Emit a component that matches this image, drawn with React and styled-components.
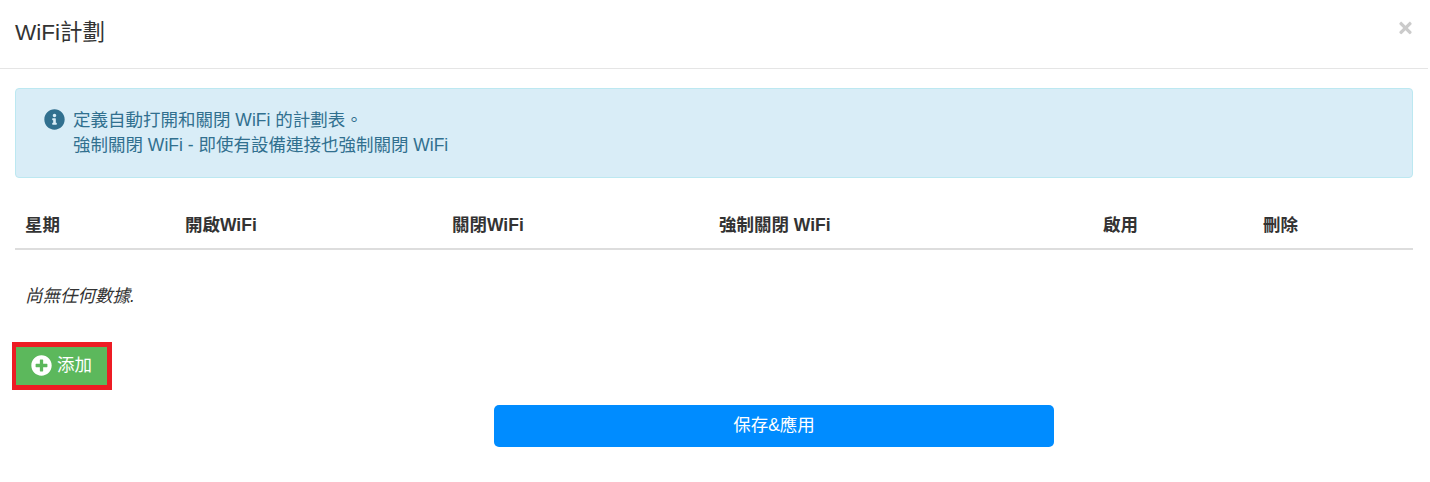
import React from 'react'
import styled, {createGlobalStyle} from 'styled-components'
import {FaInfoCircle, FaPlusCircle, FaTimes} from 'react-icons/fa'

const FONT = `"Liberation Sans", "Noto Sans CJK TC", sans-serif`

const COLUMNS = [
  {label: '星期', width: 160},
  {label: '開啟WiFi', width: 267},
  {label: '關閉WiFi', width: 267},
  {label: '強制關閉 WiFi', width: 384},
  {label: '啟用', width: 160},
  {label: '刪除', width: 160},
]

function App() {
  return (
    <>
      <GlobalStyle/>
      <Modal>
        <Header>
          <Title>WiFi計劃</Title>
          <CloseIcon/>
        </Header>
        <Body>
          <Alert>
            <InfoIcon/>
            <AlertText>
              定義自動打開和關閉 WiFi 的計劃表。<br/>
              強制關閉 WiFi - 即使有設備連接也強制關閉 WiFi
            </AlertText>
          </Alert>
          <Table>
            <thead>
              <tr>
                {COLUMNS.map(col => (
                  <HeadCell key={col.label} $width={col.width}>{col.label}</HeadCell>
                ))}
              </tr>
            </thead>
            <tbody>
              <tr>
                <EmptyCell colSpan={COLUMNS.length}>尚無任何數據.</EmptyCell>
              </tr>
            </tbody>
          </Table>
          <AddOutline>
            <AddButton><FaPlusCircle/><AddLabel>添加</AddLabel></AddButton>
          </AddOutline>
          <SaveButton>保存&amp;應用</SaveButton>
        </Body>
      </Modal>
    </>
  )
}

export default App

const GlobalStyle = createGlobalStyle`
  body {
    margin: 0;
    background: #fff;
    font-family: ${FONT};
    font-size: 17.5px;
    color: #333;
  }
`

const Modal = styled.div`
  width: 1428px;
`

const Header = styled.div`
  display: flex;
  justify-content: space-between;
  align-items: flex-start;
  height: 68px;
  padding: 0 15px;
  border-bottom: 1px solid #e5e5e5;
`

const Title = styled.h4`
  margin: 20px 0 0;
  font-size: 22.5px;
  font-weight: 400;
  line-height: 26px;
  color: #333;
`

const CloseIcon = styled(FaTimes)`
  width: 13px;
  height: 18px;
  margin: 19px 1px 0 0;
  color: #000;
  opacity: 0.2;
`

const Body = styled.div`
  padding: 19px 15px 35px;
`

const Alert = styled.div`
  display: flex;
  gap: 8px;
  height: 90px;
  box-sizing: border-box;
  padding: 19px 28px;
  background: #d9edf7;
  border: 1px solid #bce8f1;
  border-radius: 4px;
  color: #31708f;
`

const InfoIcon = styled(FaInfoCircle)`
  flex: none;
  width: 21px;
  height: 21px;
  margin-top: 1px;
`

const AlertText = styled.div`
  line-height: 25px;
`

const Table = styled.table`
  width: 100%;
  margin-top: 20px;
  border-collapse: collapse;
  table-layout: fixed;
`

const HeadCell = styled.th`
  width: ${props => props.$width}px;
  height: 51px;
  box-sizing: border-box;
  padding: 0 10px;
  border-bottom: 2px solid #ddd;
  font-weight: 700;
  text-align: left;
`

const EmptyCell = styled.td`
  height: 93px;
  box-sizing: border-box;
  padding: 0 10px 3px;
  font-style: italic;
`

const AddOutline = styled.div`
  width: fit-content;
  margin-left: -3px;
  border: 5px solid #ed1c24;
  border-left-width: 4px;
`

const AddButton = styled.button`
  display: flex;
  align-items: center;
  gap: 5px;
  width: 91px;
  height: 38px;
  padding: 0 0 2px 15px;
  background: #5cb85c;
  border: 0;
  color: #fff;
  font-family: ${FONT};
  font-size: 17.5px;

  svg {
    width: 21px;
    height: 21px;
  }
`

const AddLabel = styled.span`
  margin-bottom: 4px;
`

const SaveButton = styled.button`
  display: block;
  width: 560px;
  height: 42px;
  margin: 15px 0 0 479px;
  padding: 0 0 6px;
  background: #008cff;
  border: 0;
  border-radius: 5px;
  color: #fff;
  font-family: ${FONT};
  font-size: 17.5px;
`
